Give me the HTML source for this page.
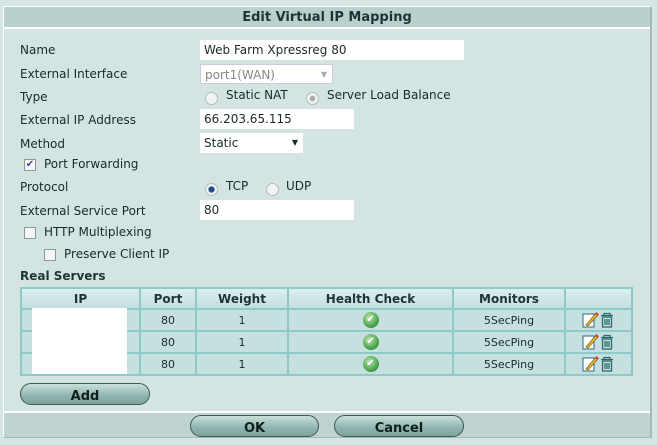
<!DOCTYPE html>
<html><head><style>
*{box-sizing:border-box}
body{margin:0;width:657px;height:445px;background:#d5e5e4;font-family:"DejaVu Sans","Liberation Sans",sans-serif;font-size:12px;color:#1a2a2a;position:relative;overflow:hidden}
.a{position:absolute}
#panel{left:3px;top:6px;width:649px;height:432px;border:1px solid #fff;border-right:2px solid #a9b8b6;border-bottom:2px solid #a9b8b6;background:#d4e4e3}
#hdr{left:4px;top:7px;width:646px;height:22px;background:#b9d0ce;border-bottom:2px solid #fff;text-align:center;font-weight:bold;font-size:13px;line-height:22px;color:#1d3535}
.lbl{left:20px;font-size:12px}
.inp{background:#fff;height:20px;line-height:20px;padding-left:4px;font-size:12px}
.rad{width:13px;height:13px;border-radius:50%;border:1px solid #b0bcbc;background:#f2f4f4}
.chk{width:12px;height:12px;border:1px solid #8a9a9a;background:#f6f6f6}
table{position:absolute;left:20px;top:287px;width:613px;border-collapse:collapse;border:2px solid #fff;font-size:11px}
td,th{border:2px solid #8fcac8;text-align:center;height:22px;padding:0;background:#c6e0df}
th{background:linear-gradient(#dbeeee,#c4dfde);font-size:12px;color:#1d3535;height:21px}
.btn{height:22px;border-radius:11px;border:1px solid #3c5a58;background:linear-gradient(#c9e0dd,#8fb3ae 60%,#7ea29d);text-align:center;font-weight:bold;font-size:13px;line-height:25px;color:#0f1f1f}
.ok{width:16px;height:16px;border-radius:50%;background:radial-gradient(circle at 40% 35%,#b8e6b0,#3c9a3c 70%);display:inline-block;vertical-align:middle;color:#fff;font-size:10px;line-height:16px}
svg{vertical-align:middle}
</style></head><body>
<div class="a" id="panel"></div>
<div class="a" id="hdr">Edit Virtual IP Mapping</div>

<div class="a lbl" style="top:43px">Name</div>
<div class="a inp" style="left:200px;top:40px;width:264px">Web Farm Xpressreg 80</div>
<div class="a lbl" style="top:67px">External Interface</div>
<div class="a inp" style="left:200px;top:64px;width:133px;color:#888;border:1px solid #ccd">port1(WAN)<span style="position:absolute;right:5px;font-size:8px;color:#aaa">▼</span></div>
<div class="a lbl" style="top:90px">Type</div>
<div class="a rad" style="left:205px;top:92px"></div>
<div class="a" style="left:226px;top:88px">Static NAT</div>
<div class="a rad" style="left:306px;top:92px;background:radial-gradient(#aaa 30%,#f0f2f2 40%)"></div>
<div class="a" style="left:327px;top:88px">Server Load Balance</div>
<div class="a lbl" style="top:113px">External IP Address</div>
<div class="a inp" style="left:200px;top:109px;width:154px">66.203.65.115</div>
<div class="a lbl" style="top:137px">Method</div>
<div class="a inp" style="left:200px;top:133px;width:103px">Static<span style="position:absolute;right:5px;font-size:8px">▼</span></div>
<div class="a chk" style="left:24px;top:159px;color:#3a4a9a;font-size:10px;line-height:10px;text-align:center">✔</div>
<div class="a" style="left:44px;top:157px">Port Forwarding</div>
<div class="a lbl" style="top:180px">Protocol</div>
<div class="a rad" style="left:205px;top:183px;background:radial-gradient(#1d4f8a 35%,#f0f2f2 45%)"></div>
<div class="a" style="left:226px;top:179px">TCP</div>
<div class="a rad" style="left:266px;top:183px"></div>
<div class="a" style="left:286px;top:179px">UDP</div>
<div class="a lbl" style="top:204px">External Service Port</div>
<div class="a inp" style="left:200px;top:200px;width:154px">80</div>
<div class="a chk" style="left:24px;top:227px"></div>
<div class="a" style="left:44px;top:225px">HTTP Multiplexing</div>
<div class="a chk" style="left:44px;top:249px"></div>
<div class="a" style="left:64px;top:247px">Preserve Client IP</div>
<div class="a" style="left:20px;top:269px;font-weight:bold;color:#1d3535">Real Servers</div>

<table>
<tr><th style="width:119px">IP</th><th style="width:56px">Port</th><th style="width:92px">Weight</th><th style="width:165px">Health Check</th><th style="width:112px">Monitors</th><th></th></tr>
<tr><td></td><td>80</td><td>1</td><td><span class="ok">✔</span></td><td>5SecPing</td><td><svg width="34" height="16" viewBox="0 0 34 16"><rect x="1" y="2" width="11" height="13" fill="#fff" stroke="#2a6a8a"/><path d="M4 13 L14 1 L16 3 L6 14 Z" fill="#e8b830" stroke="#7a5a10" stroke-width=".7"/><path d="M14 1 L16 3" stroke="#c33" stroke-width="2"/><g fill="none" stroke="#2a6a6a" stroke-width="1.3"><path d="M19 3.5 H31 M22 3.5 V1.5 H28 V3.5"/><rect x="20.5" y="5" width="9" height="10"/><path d="M23 7 V13 M25 7 V13 M27 7 V13"/></g></svg></td></tr>
<tr><td></td><td>80</td><td>1</td><td><span class="ok">✔</span></td><td>5SecPing</td><td><svg width="34" height="16" viewBox="0 0 34 16"><rect x="1" y="2" width="11" height="13" fill="#fff" stroke="#2a6a8a"/><path d="M4 13 L14 1 L16 3 L6 14 Z" fill="#e8b830" stroke="#7a5a10" stroke-width=".7"/><path d="M14 1 L16 3" stroke="#c33" stroke-width="2"/><g fill="none" stroke="#2a6a6a" stroke-width="1.3"><path d="M19 3.5 H31 M22 3.5 V1.5 H28 V3.5"/><rect x="20.5" y="5" width="9" height="10"/><path d="M23 7 V13 M25 7 V13 M27 7 V13"/></g></svg></td></tr>
<tr><td></td><td>80</td><td>1</td><td><span class="ok">✔</span></td><td>5SecPing</td><td><svg width="34" height="16" viewBox="0 0 34 16"><rect x="1" y="2" width="11" height="13" fill="#fff" stroke="#2a6a8a"/><path d="M4 13 L14 1 L16 3 L6 14 Z" fill="#e8b830" stroke="#7a5a10" stroke-width=".7"/><path d="M14 1 L16 3" stroke="#c33" stroke-width="2"/><g fill="none" stroke="#2a6a6a" stroke-width="1.3"><path d="M19 3.5 H31 M22 3.5 V1.5 H28 V3.5"/><rect x="20.5" y="5" width="9" height="10"/><path d="M23 7 V13 M25 7 V13 M27 7 V13"/></g></svg></td></tr>
</table>
<div class="a" style="left:32px;top:308px;width:95px;height:66px;background:#fff"></div>

<div class="a btn" style="left:20px;top:383px;width:130px">Add</div>
<div class="a" style="left:4px;top:411px;width:646px;height:26px;background:#bfd3d1;border-top:2px solid #fff"></div>
<div class="a btn" style="left:190px;top:415px;width:129px">OK</div>
<div class="a btn" style="left:334px;top:415px;width:130px">Cancel</div>
</body></html>
